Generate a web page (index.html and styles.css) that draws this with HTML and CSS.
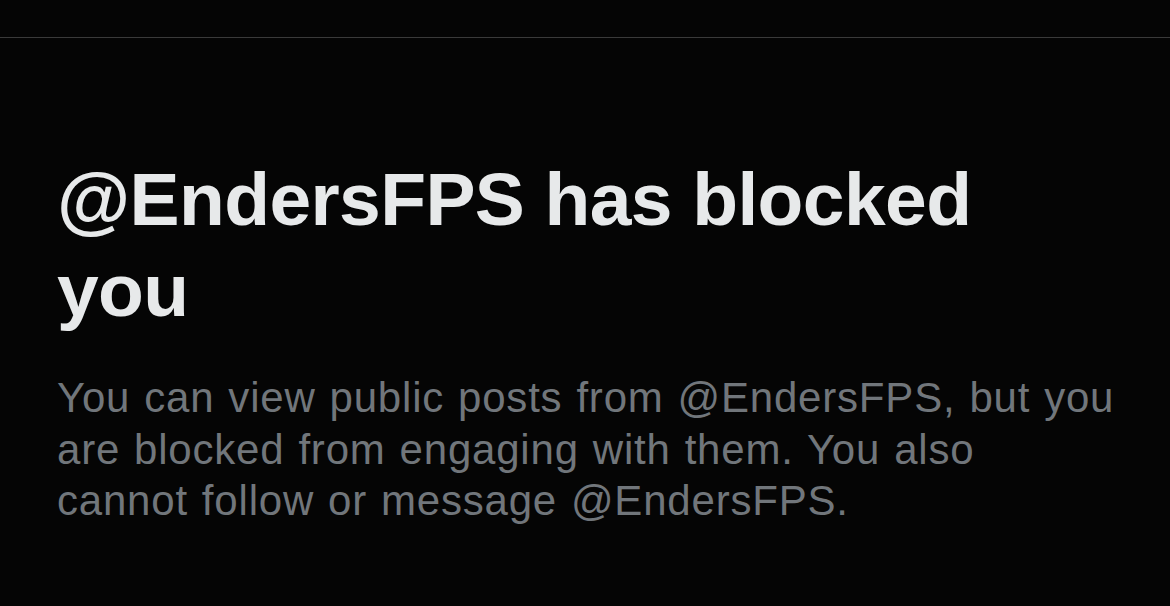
FILE: index.html
```html
<!DOCTYPE html>
<html>
<head>
<meta charset="utf-8">
<link rel="stylesheet" href="styles.css">
</head>
<body>
<div class="page">
  <div class="divider"></div>
  <section class="blocked">
    <h1 class="title">@EndersFPS has blocked you</h1>
    <p class="desc">You can view public posts from @EndersFPS, but you are blocked from engaging with them. You also cannot follow or message @EndersFPS.</p>
  </section>
</div>
</body>
</html>
```
FILE: styles.css
```css
html, body {
  margin: 0;
  padding: 0;
  background: #050505;
}
.page {
  width: 1170px;
  height: 606px;
  background: #050505;
  padding-top: 37px;
  box-sizing: border-box;
  overflow: hidden;
}
.divider {
  height: 1px;
  background: #3a3a3a;
}
.blocked {
  padding: 0 40px 0 57px;
}
.title {
  margin: 116px 0 0 0;
  font-family: "Liberation Sans", Arial, sans-serif;
  font-weight: 700;
  font-size: 75px;
  line-height: 91px;
  letter-spacing: -0.6px;
  color: #e7e9ea;
  max-width: 960px;
}
.desc {
  margin: 36px 0 0 0;
  font-family: "Liberation Sans", Arial, sans-serif;
  font-size: 42px;
  line-height: 51.5px;
  letter-spacing: 0.8px;
  word-spacing: 1.5px;
  color: #71767b;
  max-width: 1059px;
}
```
